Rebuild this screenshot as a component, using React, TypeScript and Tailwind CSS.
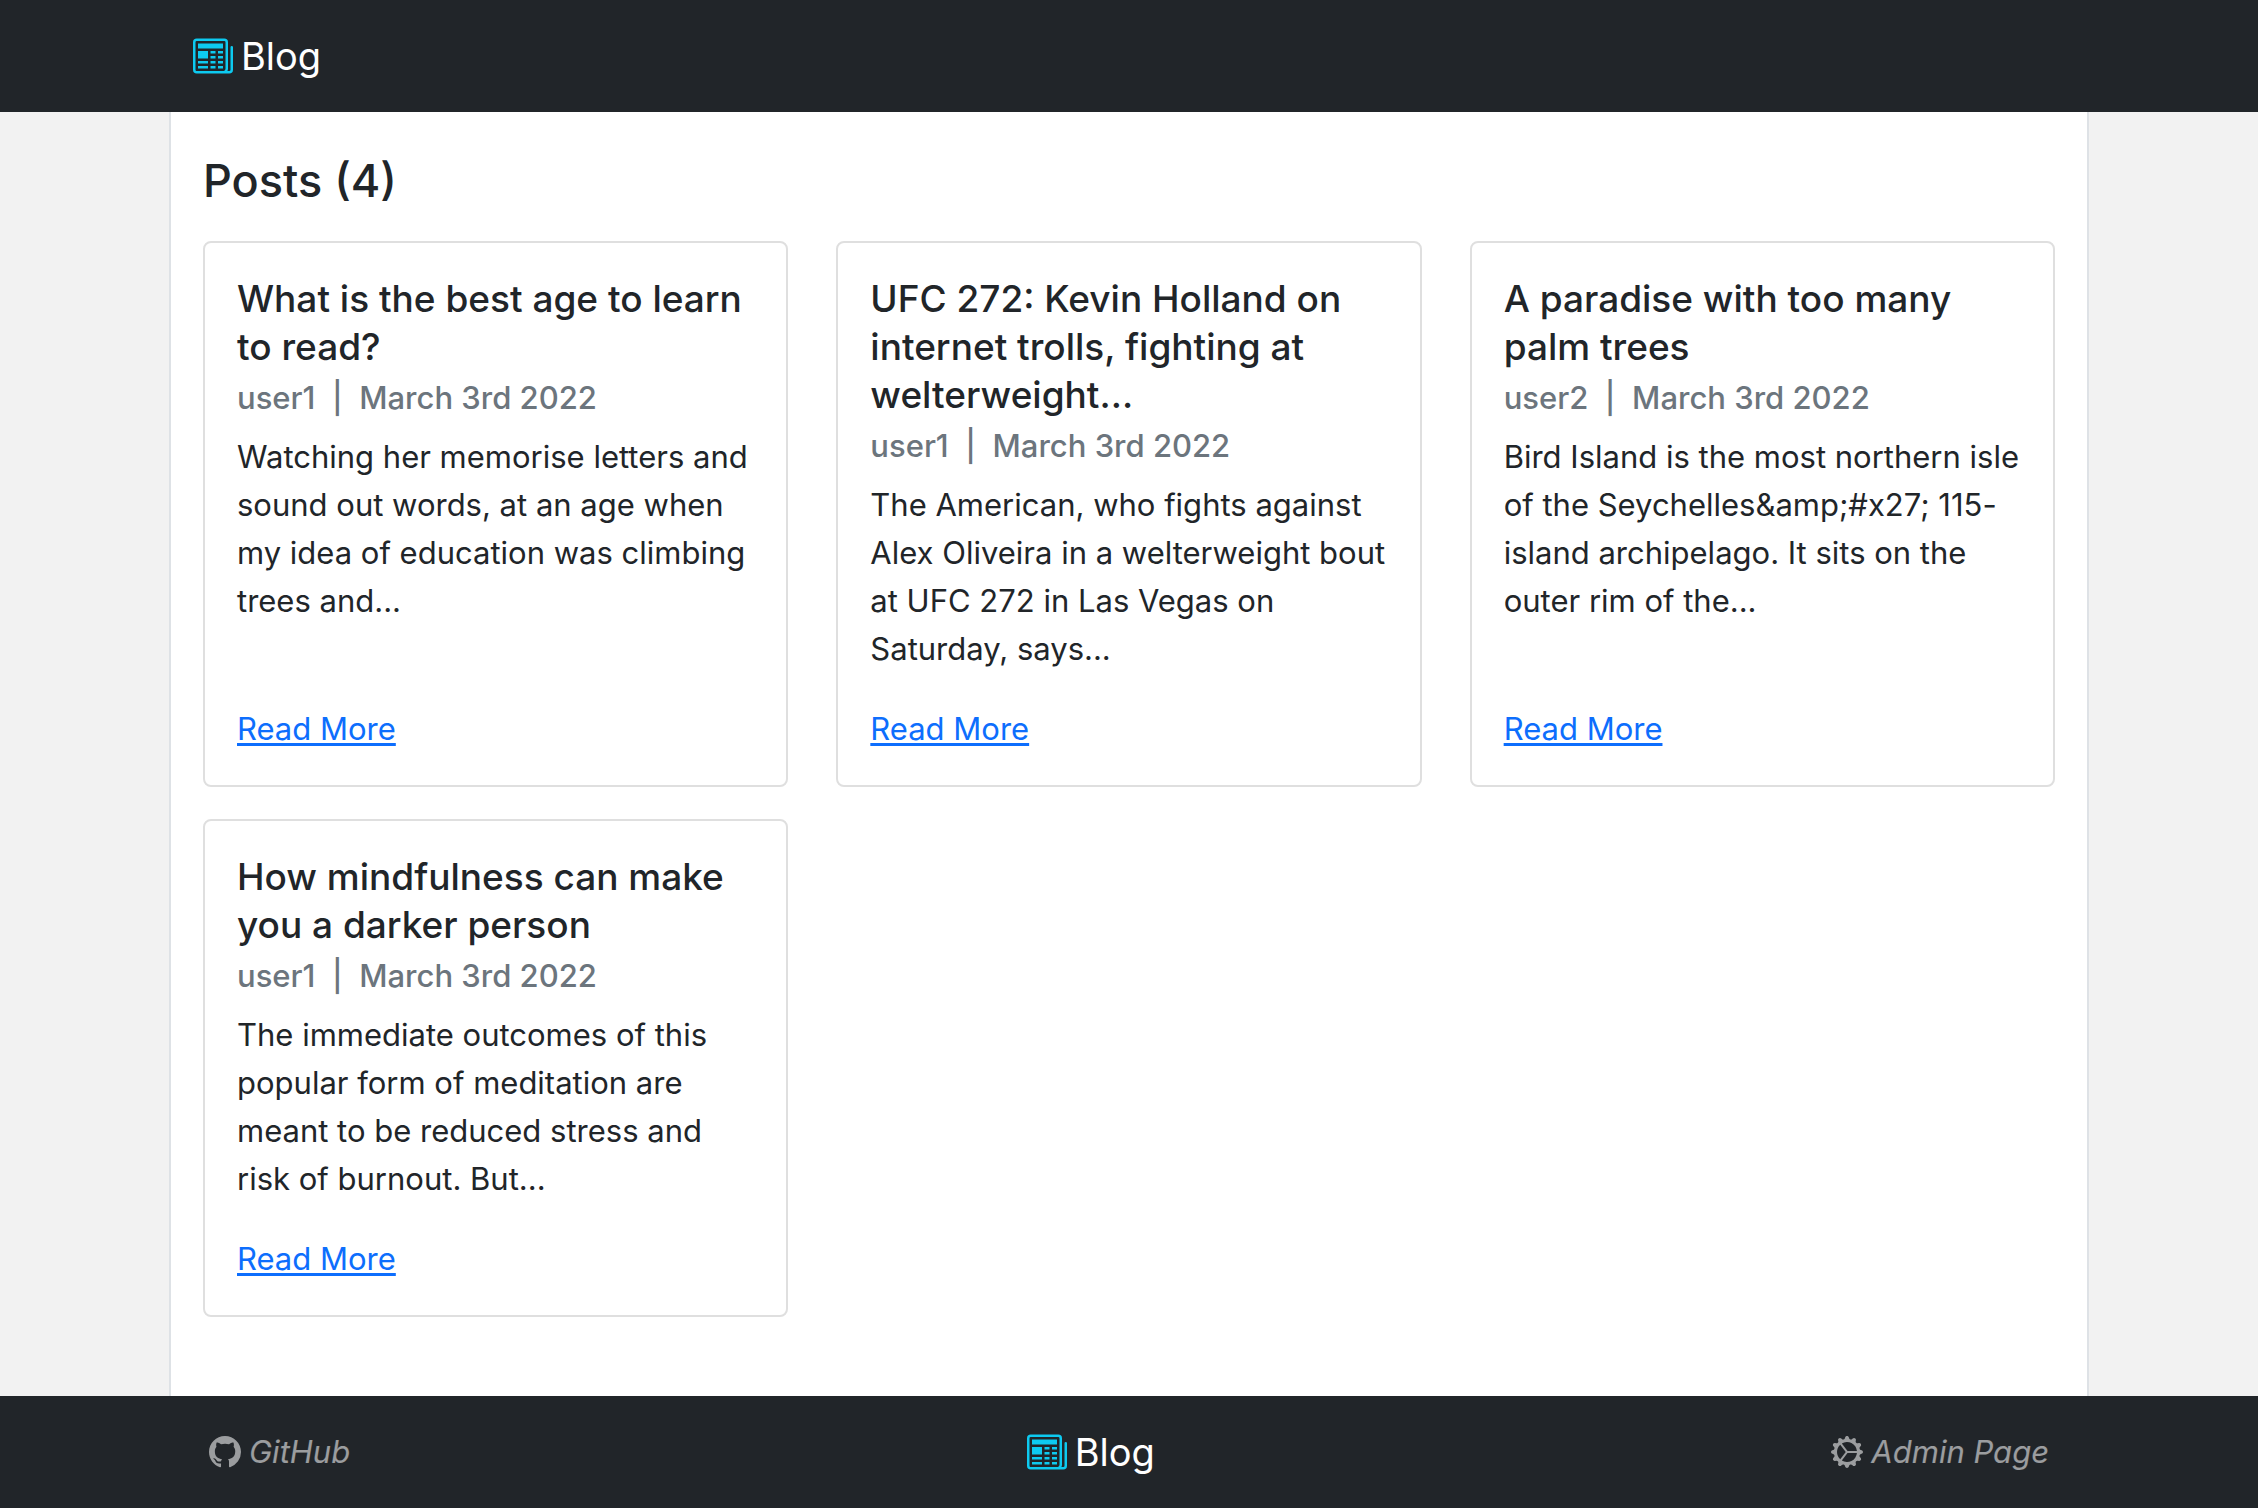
import { BsGearWideConnected, BsGithub, BsNewspaper } from "react-icons/bs";

type Post = { title: string; author: string; date: string; excerpt: string };

const posts: Post[] = [
  {
    title: "What is the best age to learn to read?",
    author: "user1",
    date: "March 3rd 2022",
    excerpt:
      "Watching her memorise letters and sound out words, at an age when my idea of education was climbing trees and...",
  },
  {
    title: "UFC 272: Kevin Holland on internet trolls, fighting at welterweight...",
    author: "user1",
    date: "March 3rd 2022",
    excerpt:
      "The American, who fights against Alex Oliveira in a welterweight bout at UFC 272 in Las Vegas on Saturday, says...",
  },
  {
    title: "A paradise with too many palm trees",
    author: "user2",
    date: "March 3rd 2022",
    excerpt:
      "Bird Island is the most northern isle of the Seychelles&amp;#x27; 115-island archipelago. It sits on the outer rim of the...",
  },
  {
    title: "How mindfulness can make you a darker person",
    author: "user1",
    date: "March 3rd 2022",
    excerpt:
      "The immediate outcomes of this popular form of meditation are meant to be reduced stress and risk of burnout. But...",
  },
];

function Brand() {
  return (
    <a href="#" className="flex items-center gap-2 text-[38px] leading-[60px] text-white">
      <BsNewspaper className="size-10 text-[#0dcaf0]" aria-hidden="true" />
      <span>Blog</span>
    </a>
  );
}

function PostCard({ post }: { post: Post }) {
  return (
    <article className="flex flex-col rounded-lg border-2 border-[#dfdfdf] bg-white p-8">
      <h2 className="mb-2 text-[37px] leading-[48px] font-medium">{post.title}</h2>
      <p className="mb-4 text-[31px] leading-[38px] font-medium text-[#6c757d]">
        {post.author}&nbsp; | &nbsp;{post.date}
      </p>
      <p className="mb-8">{post.excerpt}</p>
      <a
        href="#"
        className="mt-auto self-start text-[#0d6efd] underline decoration-[3px] underline-offset-[3px]"
      >
        Read More
      </a>
    </article>
  );
}

export default function App() {
  return (
    <div className="flex min-h-screen flex-col bg-[#f2f2f2] font-['Inter',sans-serif] text-[31px] leading-[48px] text-[#212529]">
      <header className="bg-[#212529]">
        <nav className="mx-auto flex h-28 max-w-[1920px] items-center px-6">
          <Brand />
        </nav>
      </header>

      <main className="mx-auto w-full max-w-[1920px] grow border-x-2 border-[#dee2e6] bg-white px-8 pt-10 pb-12">
        <h1 className="mb-8 text-[45px] leading-[57px] font-medium">Posts (4)</h1>
        <div className="grid grid-cols-3 gap-x-12 gap-y-8">
          {posts.map((post) => (
            <PostCard key={post.title} post={post} />
          ))}
        </div>
      </main>

      <footer className="bg-[#212529]">
        <nav className="mx-auto flex h-28 max-w-[1920px] items-center justify-between px-6">
          <a href="#" className="flex items-center gap-2 px-4 text-white/55 italic">
            <BsGithub className="size-8" aria-hidden="true" />
            <span>GitHub</span>
          </a>
          <Brand />
          <a href="#" className="flex items-center gap-2 px-4 text-white/55 italic">
            <BsGearWideConnected className="size-8" aria-hidden="true" />
            <span>Admin Page</span>
          </a>
        </nav>
      </footer>
    </div>
  );
}
